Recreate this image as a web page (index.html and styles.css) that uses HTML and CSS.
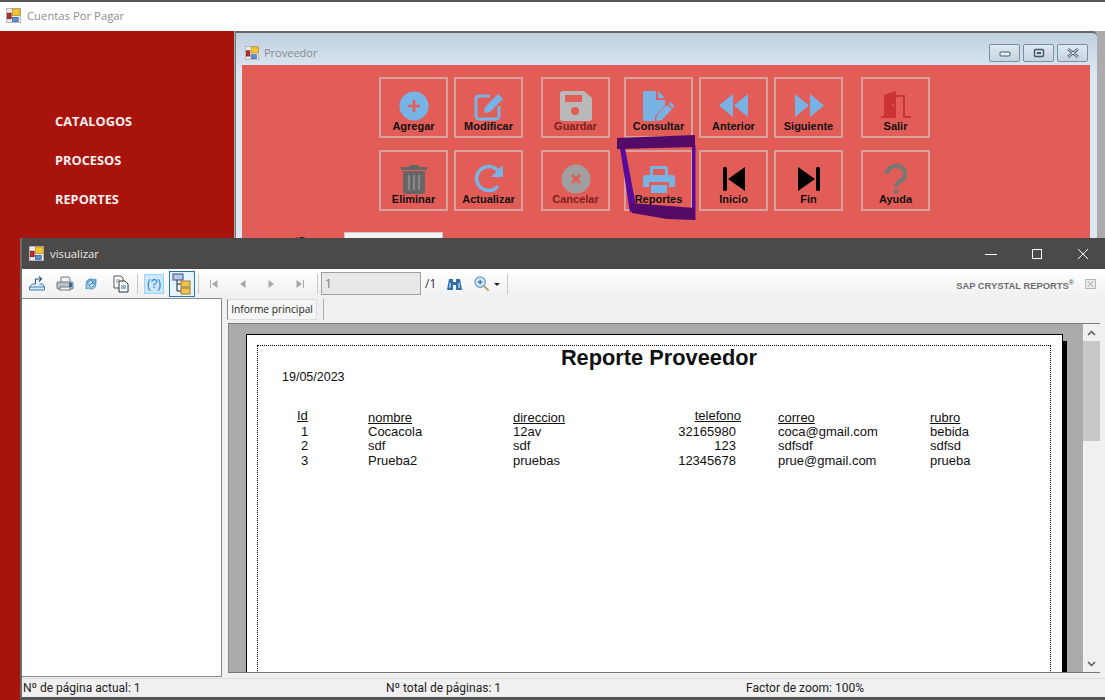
FILE: index.html
```html
<!DOCTYPE html>
<html lang="es">
<head>
    <meta charset="UTF-8">
    <meta name="viewport" content="width=device-width, initial-scale=1.0">
    <title>Cuentas Por Pagar</title>
    <link rel="stylesheet" href="styles.css">
</head>
<body>
    <svg class="sprite" width="0" height="0">
        <symbol id="appIcon" viewBox="0 0 16 16">
            <rect x="0.5" y="0.5" width="15" height="15" fill="#e9e9e9" stroke="#b5b5b5"/>
            <rect x="7" y="1" width="8" height="7" fill="#f5c52e" stroke="#a8842a" stroke-width="0.7"/>
            <rect x="1.5" y="5.5" width="4" height="6" fill="#c8281e" stroke="#5a1a16" stroke-width="0.7"/>
            <rect x="7" y="10" width="6" height="4.5" fill="#5c8fd8" stroke="#34568c" stroke-width="0.7"/>
        </symbol>
    </svg>

    <header class="app-title">
        <svg class="win-icon" width="15" height="15"><use href="#appIcon"/></svg>
        <span>Cuentas Por Pagar</span>
    </header>

    <div class="app-body">
        <nav class="sidebar">
            <a>CATALOGOS</a>
            <a>PROCESOS</a>
            <a>REPORTES</a>
        </nav>
        <main class="desktop"></main>
    </div>

    <!-- ventana Proveedor -->
    <section class="mdi-win">
        <div class="mdi-title">
            <svg class="win-icon" width="14" height="14"><use href="#appIcon"/></svg>
            <span>Proveedor</span>
            <div class="mdi-controls">
                <button class="mdi-btn"><svg width="12" height="8"><rect x="1" y="3" width="10" height="4" rx="1" fill="#e8eef5" stroke="#46566a"/></svg></button>
                <button class="mdi-btn"><svg width="12" height="10"><rect x="1.5" y="1.5" width="9" height="7" rx="1" fill="none" stroke="#46566a" stroke-width="1.4"/><rect x="4" y="4" width="4" height="2" fill="#46566a"/></svg></button>
                <button class="mdi-btn"><svg width="14" height="10"><path d="M2 1l10 8M12 1L2 9" stroke="#46566a" stroke-width="2.6"/><path d="M2 1l10 8M12 1L2 9" stroke="#f2f5f9" stroke-width="1"/></svg></button>
            </div>
        </div>
        <div class="mdi-panel">
            <div class="btn-row">
                <button class="act">
                    <svg width="32" height="30" viewBox="0 0 32 30"><circle cx="16" cy="15" r="14.5" fill="#78b3e6"/><path d="M16 9v12M10 15h12" stroke="#e35d58" stroke-width="2.6"/></svg>
                    <span>Agregar</span>
                </button>
                <button class="act">
                    <svg width="32" height="30" viewBox="0 0 32 30"><path d="M17 5H6a3 3 0 0 0-3 3v17a3 3 0 0 0 3 3h17a3 3 0 0 0 3-3V15" fill="none" stroke="#78b3e6" stroke-width="3"/><path d="M11 22l1-6L25 3l5 5-13 13z" fill="#78b3e6"/></svg>
                    <span>Modificar</span>
                </button>
                <button class="act wide-l dim">
                    <svg width="32" height="30" viewBox="0 0 32 30"><path d="M3 0h21l8 7v20a3 3 0 0 1-3 3H3a3 3 0 0 1-3-3V3a3 3 0 0 1 3-3z" fill="#b9b9b9"/><rect x="5" y="4" width="17" height="7" fill="#e35d58"/><circle cx="15" cy="20" r="4" fill="#e35d58"/></svg>
                    <span>Guardar</span>
                </button>
                <button class="act mid-l">
                    <svg width="32" height="30" viewBox="0 0 32 30"><path d="M2 0h11v9h9v6L12 25v5H2a2 2 0 0 1-2-2V2a2 2 0 0 1 2-2z" fill="#78b3e6"/><path d="M15 0l7 7h-7z" fill="#78b3e6"/><path d="M13 30l1-6 10-10 5 4-10 11zM25.500 13l2-2 4 4-2 2z" fill="#78b3e6"/></svg>
                    <span>Consultar</span>
                </button>
                <button class="act">
                    <svg width="32" height="30" viewBox="0 0 32 30"><path d="M15 3v23L1 14.500zM30 3v23L16 14.500z" fill="#78b3e6"/></svg>
                    <span>Anterior</span>
                </button>
                <button class="act">
                    <svg width="32" height="30" viewBox="0 0 32 30"><path d="M2 3v23l14-11.500zM17 3v23l14-11.500z" fill="#78b3e6"/></svg>
                    <span>Siguiente</span>
                </button>
                <button class="act wide-l">
                    <svg width="32" height="30" viewBox="0 0 32 30"><path d="M4 4l12-4v27H1v-2h3z" fill="#cc3333"/><path d="M16 4h9v21h6v2h-8V6h-7z" fill="#cc3333"/><circle cx="13" cy="14" r="1" fill="#e35d58"/></svg>
                    <span>Salir</span>
                </button>
            </div>
            <div class="btn-row">
                <button class="act">
                    <svg width="32" height="30" viewBox="0 0 32 30"><path d="M3 3h8l1-2h8l1 2h8v3H3z" fill="#666"/><path d="M5 7h22v20a3 3 0 0 1-3 3H8a3 3 0 0 1-3-3z" fill="#666"/><path d="M11 11v15M16 11v15M21 11v15" stroke="#888" stroke-width="2"/></svg>
                    <span>Eliminar</span>
                </button>
                <button class="act">
                    <svg width="32" height="30" viewBox="0 0 32 30"><path d="M25 22a12 12 0 1 1 0-15" fill="none" stroke="#78b3e6" stroke-width="3.600"/><path d="M30 1v12H18z" fill="#78b3e6"/></svg>
                    <span>Actualizar</span>
                </button>
                <button class="act wide-l dim">
                    <svg width="32" height="30" viewBox="0 0 32 30"><circle cx="16" cy="15" r="14.5" fill="#9f9f9f"/><path d="M12 11l8 8M20 11l-8 8" stroke="#e35d58" stroke-width="2.6"/></svg>
                    <span>Cancelar</span>
                </button>
                <button class="act mid-l">
                    <svg width="32" height="30" viewBox="0 0 32 30"><path d="M7 11V2h16l2 2v7h-3V5H10v6z" fill="#78b3e6"/><path d="M3 11h26a3 3 0 0 1 3 3v9h-6v-5H6v5H0v-9a3 3 0 0 1 3-3z" fill="#78b3e6"/><rect x="8" y="21" width="16" height="8" fill="#78b3e6"/></svg>
                    <span>Reportes</span>
                </button>
                <button class="act">
                    <svg width="32" height="30" viewBox="0 0 32 30"><rect x="5" y="3" width="4" height="24" rx="1.500"/><path d="M27 3v24L10 15z"/></svg>
                    <span>Inicio</span>
                </button>
                <button class="act">
                    <svg width="32" height="30" viewBox="0 0 32 30"><rect x="23" y="3" width="4" height="24" rx="1.500"/><path d="M5 3v24l17-12z"/></svg>
                    <span>Fin</span>
                </button>
                <button class="act wide-l">
                    <svg width="32" height="30" viewBox="0 0 32 30"><path d="M7 10a9 8 0 1 1 14 6.500c-3.500 2.500-5 3.500-5 6.500" fill="none" stroke="#777" stroke-width="4.200"/><circle cx="16" cy="27.500" r="2.500" fill="#777"/></svg>
                    <span>Ayuda</span>
                </button>
            </div>
            <div class="field-row">
                <label>ID</label>
                <input class="field" type="text">
            </div>
        </div>
        <!-- marca hecha a mano -->
        <svg class="scribble" width="80" height="86" viewBox="0 0 80 86">
            <path d="M75 10h3.500v75H75z" fill="#5a0a9a"/>
            <path d="M3 13h5l11 58-6 7z" fill="#5a0a9a"/>
            <path d="M0 3 78 0v12L0 14z" fill="#540a66"/>
            <path d="M13 68 78 73v12L50 84 15 78z" fill="#540a66"/>
        </svg>
    </section>

    <!-- ventana visualizar -->
    <section class="viewer">
        <div class="viewer-title">
            <svg class="win-icon" width="15" height="15"><use href="#appIcon"/></svg>
            <span>visualizar</span>
            <div class="viewer-controls">
                <svg width="12" height="12"><path d="M0 6.500h12" stroke="#fff"/></svg>
                <svg width="12" height="12"><rect x="1.500" y="1.500" width="9" height="9" fill="none" stroke="#fff"/></svg>
                <svg width="12" height="12"><path d="M1 1l10 10M11 1L1 11" stroke="#fff"/></svg>
            </div>
        </div>

        <div class="toolbar">
            <button class="tool"><svg width="18" height="18" viewBox="0 0 18 18"><path d="M1.500 12h15l-2-3h-3M1.500 12v3h15v-3M1.500 12l3-3h3" fill="#dceaf6" stroke="#3d7fb5"/><path d="M7.500 9V4h6M11 1.500 13.500 4 11 6.500" fill="none" stroke="#1d5f96" stroke-width="1.200"/></svg></button>
            <button class="tool"><svg width="18" height="18" viewBox="0 0 18 18"><path d="M5 7V2h8l1 2v3" fill="#f2f2f2" stroke="#777"/><rect x="1" y="7" width="16" height="7" rx="1" fill="#b9c3cc" stroke="#6a7680"/><rect x="4" y="12" width="10" height="3" fill="#f5f5f5" stroke="#777"/><rect x="13" y="8" width="3" height="4" fill="#2a6a9c"/></svg></button>
            <button class="tool tool-refresh"><svg width="14" height="14" viewBox="0 0 14 14"><path d="M2 6a5 5 0 0 1 8-3l2-1v5H7l2-2a3 3 0 0 0-5 1z" fill="#6fb1d8" stroke="#2f7cab" stroke-width="0.7"/><path d="M12 8a5 5 0 0 1-8 3l-2 1V7h5L5 9a3 3 0 0 0 5-1z" fill="#9ad2ec" stroke="#2f7cab" stroke-width="0.7"/></svg></button>
            <button class="tool"><svg width="18" height="18" viewBox="0 0 18 18"><path d="M2 1h7l2 2v10H2z" fill="#fff" stroke="#555"/><path d="M7 6h6l3 3v8H7z" fill="#fff" stroke="#333"/><path d="M9 11h5M9 13h5" stroke="#2a6a9c"/><path d="M4 5h4M4 7h2" stroke="#888"/></svg></button>
            <i class="sep"></i>
            <button class="tool-help">(?)</button>
            <button class="tool-tree"><svg width="20" height="22" viewBox="0 0 20 22"><rect x="1" y="1" width="10" height="6" fill="#b9c8ea" stroke="#33517a"/><path d="M5 7v11h4M5 11h4" fill="none" stroke="#222"/><rect x="9" y="8" width="9" height="6" fill="#f3c34f" stroke="#9a7a2a"/><rect x="9" y="15" width="9" height="6" fill="#f3c34f" stroke="#9a7a2a"/></svg></button>
            <i class="sep sep-tree"></i>
            <button class="nav"><svg width="10" height="10"><path d="M1.500 1v8" stroke="#a8a8a8"/><path d="M8.500 1v8L3 5z" fill="#a8a8a8"/></svg></button>
            <button class="nav"><svg width="10" height="10"><path d="M7.500 1v8L2 5z" fill="#a8a8a8"/></svg></button>
            <button class="nav"><svg width="10" height="10"><path d="M2.500 1v8L8 5z" fill="#a8a8a8"/></svg></button>
            <button class="nav"><svg width="10" height="10"><path d="M8.500 1v8" stroke="#a8a8a8"/><path d="M1.500 1v8L7 5z" fill="#a8a8a8"/></svg></button>
            <i class="sep sep-nav"></i>
            <input class="page-input" type="text" value="1" disabled>
            <span class="page-total">/1</span>
            <button class="tool-find"><svg width="15" height="14" viewBox="0 0 15 14"><path d="M2 2h4v3h3V2h4l2 11H9V8H6v5H0z" fill="#2f6fa8"/><path d="M3 6v5M12 6v5" stroke="#a8d0ee" stroke-width="1.500"/></svg></button>
            <button class="tool-zoom"><svg width="16" height="16" viewBox="0 0 17 17"><circle cx="6.500" cy="6.500" r="5.500" fill="#d5e9f8" stroke="#6b97c2" stroke-width="1.300"/><path d="M6.500 4v5M4 6.500h5" stroke="#2c6aa4" stroke-width="1.300"/><path d="M10.500 10.500l5 5" stroke="#c09a55" stroke-width="2"/></svg></button>
            <i class="caret"></i>
            <i class="sep sep-zoom"></i>
            <span class="brand">SAP CRYSTAL REPORTS<sup>®</sup></span>
            <svg class="tool-close" width="11" height="10"><rect x="0.500" y="0.500" width="10" height="9" fill="#eee" stroke="#b5b5b5"/><path d="M2.500 2l6 6M8.500 2l-6 6" stroke="#a0a0a0"/></svg>
        </div>

        <div class="viewer-body">
            <aside class="tree-panel"></aside>
            <div class="doc-area">
                <div class="tabs">
                    <span class="tab">Informe principal</span>
                    <i class="tab-sep"></i>
                </div>
                <div class="report-frame">
                    <div class="report-bg">
                        <div class="page">
                            <div class="page-inner">
                                <h1 class="rep-title">Reporte Proveedor</h1>
                                <p class="rep-date">19/05/2023</p>
                                <div class="rep-table">
                                    <span class="h id-h up">Id</span><span class="h low">nombre</span><span class="h low">direccion</span><span class="h tel-h up">telefono</span><span class="h low col-mail">correo</span><span class="h low">rubro</span>

                                    <span class="id">1</span><span>Cocacola</span><span>12av</span><span class="tel">32165980</span><span class="col-mail">coca@gmail.com</span><span>bebida</span>
                                    <span class="id">2</span><span>sdf</span><span>sdf</span><span class="tel">123</span><span class="col-mail">sdfsdf</span><span>sdfsd</span>
                                    <span class="id">3</span><span>Prueba2</span><span>pruebas</span><span class="tel">12345678</span><span class="col-mail">prue@gmail.com</span><span>prueba</span>
                                </div>
                            </div>
                        </div>
                    </div>
                    <div class="vscroll">
                        <button class="sc-arrow"><svg width="9" height="6"><path d="M1 5l3.500-3.500L8 5" fill="none" stroke="#555" stroke-width="1.500"/></svg></button>
                        <div class="sc-track"><div class="sc-thumb"></div></div>
                        <button class="sc-arrow"><svg width="9" height="6"><path d="M1 1l3.500 3.500L8 1" fill="none" stroke="#555" stroke-width="1.500"/></svg></button>
                    </div>
                </div>
            </div>
        </div>

        <footer class="status">
            <span>Nº de página actual: 1</span>
            <span>Nº total de páginas: 1</span>
            <span>Factor de zoom: 100%</span>
        </footer>
    </section>
</body>
</html>
```

FILE: styles.css
```css
* {
    box-sizing: border-box;
}
html, body {
    margin: 0;
    padding: 0;
}
body {
    position: relative;
    width: 1105px;
    height: 700px;
    overflow: hidden;
    background-color: #ababab;
    font-family: "Open Sans", sans-serif;
}
button {
    font-family: inherit;
    padding: 0;
    background: none;
    border: none;
}
.sprite {
    position: absolute;
}
.win-icon {
    flex: none;
}

/* ventana principal */
.app-title {
    display: flex;
    align-items: center;
    gap: 6px;
    height: 31px;
    padding: 0 0 2px 6px;
    background-color: #fff;
    border-top: 2px solid #555;
    color: #8c8c8c;
    font-size: 11.300px;
}
.app-body {
    display: flex;
    height: 669px;
}
.sidebar {
    display: flex;
    flex-direction: column;
    gap: 20px;
    width: 234px;
    padding: 81px 0 0 55px;
    background-color: #a8140c;
    color: #f5eeee;
    font-size: 12.800px;
    font-weight: 700;
    line-height: 19px;
}
.desktop {
    flex: 1;
}

/* ventana Proveedor */
.mdi-win {
    position: absolute;
    left: 235px;
    top: 31px;
    width: 862px;
    height: 211px;
    padding: 0 7px 0 6px;
    background: linear-gradient(#c1d0df, #dde8f3 20%);
    border-top: 2px solid #666;
    border-left: 1px solid #777;
    border-top-right-radius: 5px;
}
.mdi-title {
    display: flex;
    align-items: center;
    gap: 5px;
    height: 32px;
    padding: 7px 0 0 3px;
    color: #8a8a8a;
    font-size: 11px;
}
.mdi-controls {
    display: flex;
    gap: 3px;
    margin-left: auto;
    margin-right: 2px;
}
.mdi-btn {
    display: flex;
    align-items: center;
    justify-content: center;
    width: 31px;
    height: 18px;
    background: linear-gradient(#dfe8f1, #c6d3e1);
    border: 1px solid #7a8ea5;
    border-radius: 2px;
}
.mdi-panel {
    height: 173px;
    padding: 12px 0 0 137px;
    overflow: hidden;
    background-color: #e35d58;
}
.btn-row {
    display: flex;
    gap: 6px;
    margin-bottom: 12px;
}
.act {
    display: flex;
    flex-direction: column;
    align-items: center;
    flex: none;
    width: 69px;
    height: 61px;
    padding-top: 12px;
    border: 2px solid #d8a19e;
    color: #111;
    font-family: "Liberation Sans", Arial, sans-serif;
    font-size: 11px;
    font-weight: bold;
    line-height: 11px;
}
.act svg {
    flex: none;
}
.wide-l {
    margin-left: 12px;
}
.mid-l {
    margin-left: 8px;
}
.dim {
    color: #7d1f1c;
}
.field-row {
    display: flex;
    align-items: flex-start;
    margin: 21px 0 0 -137px;
}
.field-row label {
    width: 102px;
    margin-top: 1px;
    padding-left: 53px;
    color: #222;
    font-size: 12px;
}
.field {
    width: 99px;
    height: 20px;
    background-color: #f2f2f2;
    border: 1px solid #ccc;
}
.scribble {
    position: absolute;
    left: 381px;
    top: 102px;
}

/* ventana visualizar */
.viewer {
    position: absolute;
    left: 20px;
    top: 238px;
    width: 1085px;
    height: 462px;
    background-color: #f0f0f0;
    border-left: 2px solid #6b6b6b;
    border-bottom: 3px solid #555;
}
.viewer-title {
    display: flex;
    align-items: center;
    gap: 6px;
    height: 31px;
    padding-left: 7px;
    background-color: #4c4a48;
    color: #e8e8e8;
    font-size: 11.300px;
}
.viewer-controls {
    display: flex;
    gap: 34px;
    margin-left: auto;
    margin-right: 16px;
}
.toolbar {
    display: flex;
    align-items: center;
    height: 29px;
    padding-left: 1px;
    background: linear-gradient(#fff, #f0f0f0);
}
.tool {
    display: flex;
    align-items: center;
    justify-content: center;
    flex: none;
    width: 28px;
    height: 24px;
}
.tool-refresh svg {
    margin-right: 4px;
}
.sep {
    flex: none;
    width: 1px;
    height: 20px;
    margin: 0 6px 0 2px;
    background-color: #c8c8c8;
}
.tool-help {
    flex: none;
    width: 20px;
    height: 20px;
    margin-right: 5px;
    background-color: #cce8ff;
    border: 1px solid #99d1ff;
    color: #2b7cc0;
    font-family: "Liberation Sans", Arial, sans-serif;
    font-size: 12px;
}
.tool-tree {
    display: flex;
    align-items: center;
    justify-content: center;
    flex: none;
    width: 26px;
    height: 26px;
    background-color: #e5f3ff;
    border: 1px solid #2a75ab;
}
.sep-tree {
    margin: 0 1px 0 3px;
}
.nav {
    display: flex;
    align-items: center;
    justify-content: center;
    flex: none;
    width: 28.500px;
    height: 20px;
}
.sep-nav {
    margin: 0 3px 0 3px;
}
.page-input {
    flex: none;
    width: 100px;
    height: 23px;
    padding: 0 3px;
    background-color: #e8e8e8;
    border: 1px solid #a0a0a0;
    color: #777;
    font-family: "Open Sans", sans-serif;
    font-size: 12px;
}
.page-total {
    flex: none;
    margin-left: 4px;
    color: #333;
    font-size: 12px;
}
.tool-find {
    display: flex;
    flex: none;
    margin-left: 11px;
}
.tool-zoom {
    display: flex;
    flex: none;
    margin-left: 12px;
}
.caret {
    flex: none;
    margin-left: 4px;
    margin-top: 2px;
    border-top: 3px solid #222;
    border-left: 3px solid transparent;
    border-right: 3px solid transparent;
}
.sep-zoom {
    margin: 0 0 0 7px;
}
.brand {
    margin-left: auto;
    margin-top: 3px;
    color: #6e6e6e;
    font-family: "Liberation Sans", Arial, sans-serif;
    font-size: 9.400px;
    font-weight: bold;
    white-space: nowrap;
}
.brand sup {
    font-size: 7px;
    line-height: 0;
}
.tool-close {
    flex: none;
    margin: 0 9px 0 11px;
}
.viewer-body {
    display: flex;
    height: 379px;
}
.tree-panel {
    flex: none;
    width: 200px;
    background-color: #fff;
    border: 1px solid #8a8a8a;
    border-left: none;
}
.doc-area {
    display: flex;
    flex-direction: column;
    width: 872px;
    margin-left: 6px;
}
.tabs {
    display: flex;
    height: 25px;
}
.tab {
    width: 90px;
    height: 21px;
    margin: 1px 0 0 -1px;
    background-color: #f6f6f6;
    border-top: 1px solid #ddd;
    border-left: 1px solid #888;
    border-right: 1px solid #ddd;
    border-bottom: 1px solid #ddd;
    color: #222;
    font-size: 10.200px;
    line-height: 19px;
    text-align: center;
    white-space: nowrap;
}
.tab-sep {
    width: 1px;
    height: 21px;
    margin: 1px 0 0 6px;
    background-color: #aaa;
}
.report-frame {
    display: flex;
    height: 350px;
    border-top: 1px solid #777;
    border-bottom: 1px solid #777;
    border-left: 1px solid #888;
}
.report-bg {
    flex: none;
    width: 854px;
    padding: 10px 0 0 17px;
    overflow: hidden;
    background-color: #ababab;
}
.page {
    width: 817px;
    height: 400px;
    padding: 10px 11px 0 10px;
    background-color: #fff;
    border: 1px solid #000;
    box-shadow: 4px 7px 0 #000;
    color: #111;
    font-family: "Liberation Sans", Arial, sans-serif;
}
.page-inner {
    height: 100%;
    border: 1px dotted #000;
}
.rep-title {
    margin: 0;
    padding-left: 10px;
    font-size: 21.800px;
    line-height: 24px;
    text-align: center;
}
.rep-date {
    margin: 0 0 0 24px;
    font-size: 12.500px;
    line-height: 14px;
}
.rep-table {
    display: grid;
    grid-template-columns: 78px 145px 127px 101px 189px 100px;
    grid-auto-rows: 14.500px;
    margin: 26px 0 0 32px;
    font-size: 13px;
    line-height: 14px;
}
.rep-table .h {
    text-decoration: underline;
}
.rep-table .up {
    margin-top: -1px;
}
.rep-table .low {
    padding-top: 1px;
}
.rep-table .id-h {
    padding-left: 7px;
}
.rep-table .id {
    padding-left: 11px;
}
.rep-table .tel-h {
    text-align: right;
}
.rep-table .tel {
    padding-right: 5px;
    text-align: right;
}
.rep-table .col-mail {
    padding-left: 37px;
}
.vscroll {
    display: flex;
    flex-direction: column;
    flex: none;
    width: 17px;
    background-color: #f0f0f0;
}
.sc-arrow {
    display: flex;
    align-items: center;
    justify-content: center;
    flex: none;
    height: 17px;
}
.sc-track {
    flex: 1;
}
.sc-thumb {
    height: 100px;
    background-color: #c8c8c8;
}
.status {
    display: grid;
    grid-template-columns: 363px 360px 1fr;
    height: 20px;
    margin-top: 1px;
    padding-left: 1px;
    border-top: 1px solid #ddd;
    color: #222;
    font-family: Roboto, sans-serif;
    font-size: 12px;
    line-height: 19px;
}
```
